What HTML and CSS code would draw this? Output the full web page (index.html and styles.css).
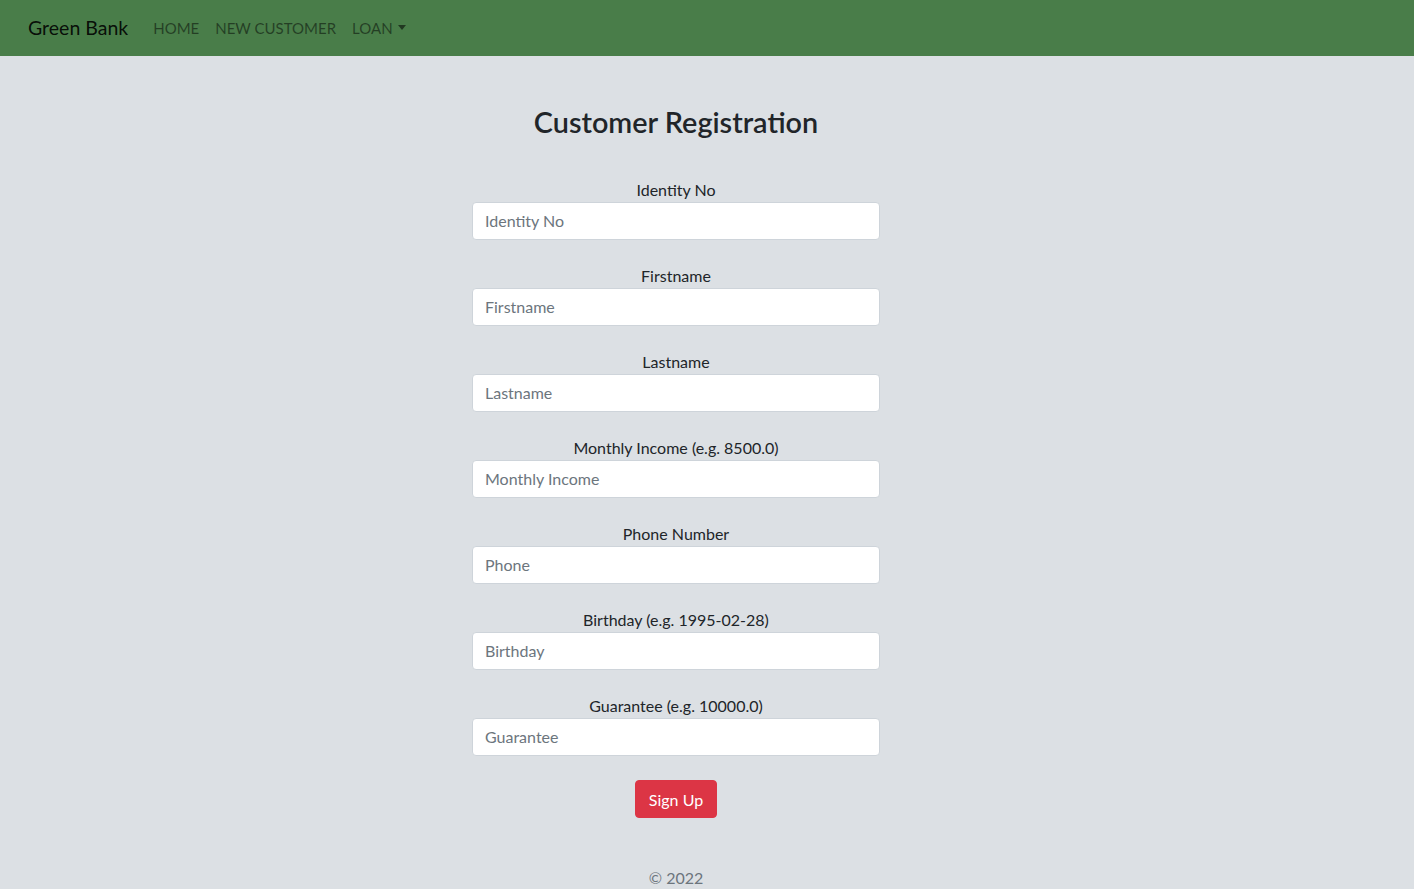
FILE: index.html
```html
<!DOCTYPE html>
<html lang="en">
<head>
<meta charset="utf-8">
<title>Green Bank - Customer Registration</title>
<link rel="stylesheet" href="styles.css">
</head>
<body>
<nav class="navbar">
  <a class="brand" href="#">Green Bank</a>
  <ul class="nav">
    <li><a class="nav-link" href="#">HOME</a></li>
    <li><a class="nav-link" href="#">NEW CUSTOMER</a></li>
    <li><a class="nav-link dropdown" href="#">LOAN<span class="caret"></span></a></li>
  </ul>
</nav>
<main class="main">
  <h2 class="title">Customer Registration</h2>
  <form class="form">
    <div class="group"><label class="label">Identity No</label><input class="input" placeholder="Identity No"></div>
    <div class="group"><label class="label">Firstname</label><input class="input" placeholder="Firstname"></div>
    <div class="group"><label class="label">Lastname</label><input class="input" placeholder="Lastname"></div>
    <div class="group"><label class="label">Monthly Income (e.g. 8500.0)</label><input class="input" placeholder="Monthly Income"></div>
    <div class="group"><label class="label">Phone Number</label><input class="input" placeholder="Phone"></div>
    <div class="group"><label class="label">Birthday (e.g. 1995-02-28)</label><input class="input" placeholder="Birthday"></div>
    <div class="group"><label class="label">Guarantee (e.g. 10000.0)</label><input class="input" placeholder="Guarantee"></div>
    <button class="btn" type="button">Sign Up</button>
  </form>
  <footer class="footer">© 2022</footer>
</main>
</body>
</html>
```
FILE: styles.css
```css
* { box-sizing: border-box; }
html, body { margin: 0; padding: 0; }
body {
  background: #dce0e4;
  font-family: "Lato", "Noto Sans", sans-serif;
  font-size: 16px;
  line-height: 1.5;
  color: #212529;
  height: 889px;
  overflow: hidden;
}
.navbar {
  height: 56px;
  background: #497d49;
  display: flex;
  align-items: center;
  padding: 0 28px;
}
.brand {
  font-size: 19.5px;
  color: rgba(0,0,0,0.9);
  text-decoration: none;
  margin-right: 17px;
}
.nav {
  list-style: none;
  display: flex;
  margin: 0;
  padding: 0;
}
.nav-link {
  display: flex;
  align-items: center;
  padding: 8px 8px;
  font-size: 15px;
  color: rgba(0,0,0,0.5);
  text-decoration: none;
}
.caret {
  display: inline-block;
  margin-left: 5px;
  width: 0;
  height: 0;
  border-top: 5px solid rgba(0,0,0,0.55);
  border-left: 4px solid transparent;
  border-right: 4px solid transparent;
  margin-top: -2px;
}
.main {
  display: flex;
  flex-direction: column;
  align-items: center;
  padding-top: 47px;
  padding-right: 62px;
}
.title {
  margin: 0;
  font-size: 28.8px;
  font-weight: 600;
  line-height: 38px;
  color: #212529;
}
.form {
  margin-top: 37px;
  width: 408px;
  display: flex;
  flex-direction: column;
  align-items: center;
}
.group {
  width: 100%;
  display: flex;
  flex-direction: column;
  align-items: center;
  margin-bottom: 24px;
}
.label {
  line-height: 24px;
  font-size: 16px;
}
.input {
  width: 100%;
  height: 38px;
  padding: 5px 12px 7px;
  font-family: inherit;
  font-size: 16px;
  color: #495057;
  background: #fff;
  border: 1px solid #ced4da;
  border-radius: 4px;
}
.input::placeholder { color: #6c757d; opacity: 1; }
.btn {
  width: 82px;
  height: 38px;
  background: #dc3545;
  color: #fff;
  border: 1px solid #dc3545;
  border-radius: 4px;
  font-family: inherit;
  font-size: 16px;
  padding: 0;
}
.footer {
  margin-top: 48px;
  color: #6c757d;
  font-size: 16px;
  line-height: 24px;
}
```
